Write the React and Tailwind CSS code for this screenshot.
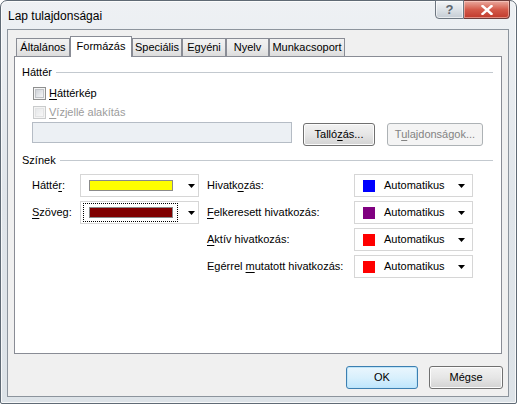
import React from "react";

const Arrow = () => (
  <svg width="7" height="4" viewBox="0 0 7 4" className="shrink-0">
    <path d="M0 0H7L3.5 4Z" fill="#000" />
  </svg>
);

const Checkbox = ({ disabled }) => (
  <div
    className={
      "w-[13px] h-[13px] border p-px shrink-0 " +
      (disabled ? "border-[#c9cbcc] bg-[#f4f4f4]" : "border-[#8e8f8f] bg-[#f4f4f4]")
    }
  >
    <div
      className={
        "w-full h-full border " +
        (disabled
          ? "border-[#e2e3e4] bg-gradient-to-br from-[#e6e8ea] to-[#f7f7f7]"
          : "border-[#c0c3c7] bg-gradient-to-br from-[#cfd3d8] to-[#f5f6f7]")
      }
    />
  </div>
);

const Header = ({ children }) => (
  <div className="h-[16px] flex items-center pl-[7px] pr-[8px]">
    <span>{children}</span>
    <div className="flex-1 h-px bg-[#c3c9cf] ml-[4px]" />
  </div>
);

const WinButton = ({ children, w, isDefault, disabled }) => {
  let cls =
    "h-[23px] rounded-[3px] border flex items-center justify-center shrink-0 ";
  if (disabled) cls += "border-[#adb2b5] bg-[#f4f4f4] text-[#838383]";
  else if (isDefault)
    cls +=
      "border-[#3c7fb1] bg-gradient-to-b from-[#eaf6fd] via-[#d9f0fc] to-[#bee6fd] shadow-[inset_0_0_0_1px_#bfe4f8]";
  else
    cls +=
      "border-[#707070] bg-gradient-to-b from-[#f2f2f2] via-[#e6e6e6] to-[#d3d3d3] shadow-[inset_0_0_0_1px_#fcfcfc]";
  return (
    <div className={cls} style={{ width: w }}>
      {children}
    </div>
  );
};

const LeftCombo = ({ color, focused }) => (
  <div className="w-[119px] h-[23px] border border-[#d6d6d6] bg-white flex items-center">
    <div
      className={
        "ml-[2px] w-[95px] h-[19px] flex items-center pl-[5px] border border-dotted " +
        (focused ? "border-black" : "border-transparent")
      }
    >
      <div className="w-[84px] h-[11px] border border-[#8a8a8a]" style={{ background: color }} />
    </div>
    <div className="ml-auto mr-[3px]">
      <Arrow />
    </div>
  </div>
);

const RightCombo = ({ color }) => (
  <div className="w-[119px] h-[23px] border border-[#d6d6d6] bg-white flex items-center">
    <div className="ml-[8px] w-[12px] h-[12px]" style={{ background: color }} />
    <span className="ml-[9px]">Automatikus</span>
    <div className="ml-auto mr-[7px]">
      <Arrow />
    </div>
  </div>
);

const tabs = [
  { label: "Általános", w: 54 },
  { label: "Formázás", w: 62, sel: true },
  { label: "Speciális", w: 50 },
  { label: "Egyéni", w: 44 },
  { label: "Nyelv", w: 43 },
  { label: "Munkacsoport", w: 76 },
];

const U = ({ children }) => <span className="underline underline-offset-[2px]">{children}</span>;

export default function App() {
  return (
    <div className="w-[517px] h-[404px] bg-white font-['Liberation_Sans',Arial,sans-serif] text-[11px] text-black leading-none">
      <div className="w-full h-full flex flex-col border border-[#5f6a75] rounded-t-[7px] rounded-b-[2px] bg-gradient-to-b from-[#eef1f4] via-[#e0e5ea] to-[#dde3e8] shadow-[inset_0_0_0_1px_rgba(255,255,255,0.75)]">
        {/* title bar */}
        <div className="h-[28px] flex items-start justify-between shrink-0">
          <div className="pl-[7px] pt-[9px] text-[12px]">Lap tulajdonságai</div>
          <div className="flex mr-[6px] -mt-px">
            <div className="w-[29px] h-[19px] border border-[#6d7680] rounded-bl-[4px] bg-gradient-to-b from-[#f3f5f7] via-[#dde2e7] to-[#c5ccd3] flex items-center justify-center text-[#5d6670] text-[13px] font-bold shadow-[inset_0_0_0_1px_rgba(255,255,255,0.6)]">
              ?
            </div>
            <div className="w-[46px] h-[19px] border border-l-0 border-[#6d3c3a] rounded-br-[4px] bg-gradient-to-b from-[#e9a99f] via-[#d45a4a] to-[#c0392b] flex items-center justify-center shadow-[inset_0_0_0_1px_rgba(255,220,210,0.5)]">
              <svg width="12" height="10" viewBox="0 0 12 10">
                <path d="M1.5 1L10.5 9M10.5 1L1.5 9" stroke="#fff" strokeWidth="2.4" strokeLinecap="square" />
              </svg>
            </div>
          </div>
        </div>

        {/* client */}
        <div className="flex-1 ml-[6px] mr-[7px] mb-[6px] border border-[#8c949d] bg-[#f0f0f0] flex flex-col">
          <div className="pt-[6px] ml-[6px]">
            {/* tabs */}
            <div className="h-[20px] flex items-end ml-[2px] relative z-10">
              {tabs.map((t) =>
                t.sel ? (
                  <div
                    key={t.label}
                    className="h-[21px] -mb-px bg-white border border-b-0 border-[#898c95] flex items-start justify-center pt-[4px] shrink-0"
                    style={{ width: t.w }}
                  >
                    {t.label}
                  </div>
                ) : (
                  <div
                    key={t.label}
                    className="h-[18px] border border-b-0 border-[#898c95] bg-gradient-to-b from-[#f2f2f2] via-[#ebebeb] to-[#dcdcdc] flex items-center justify-center shrink-0"
                    style={{ width: t.w }}
                  >
                    {t.label}
                  </div>
                )
              )}
            </div>
            {/* panel */}
            <div className="w-[488px] h-[298px] border border-[#898c95] bg-white flex flex-col">
              <div className="mt-[7px]">
                <Header>Háttér</Header>
              </div>
              <div className="mt-[5px] h-[16px] flex items-center pl-[18px] gap-[3px]">
                <Checkbox />
                <span>
                  <U>H</U>áttérkép
                </span>
              </div>
              <div className="mt-[3px] h-[16px] flex items-center pl-[18px] gap-[3px] text-[#9c9c9c]">
                <Checkbox disabled />
                <span>
                  <U>V</U>ízjellé alakítás
                </span>
              </div>
              <div className="mt-[2px] flex items-start pl-[17px]">
                <div className="w-[260px] h-[21px] border border-[#b5bcc5] bg-[#ecf0f4]" />
                <div className="ml-[11px] mt-[1px]">
                  <WinButton w={72}>
                    <span>
                      Talló<U>z</U>ás...
                    </span>
                  </WinButton>
                </div>
                <div className="ml-[12px] mt-[1px]">
                  <WinButton w={96} disabled>
                    <span>
                      T<U>u</U>lajdonságok...
                    </span>
                  </WinButton>
                </div>
              </div>
              <div className="mt-[6px]">
                <Header>Színek</Header>
              </div>
              <div className="mt-[6px] flex pl-[17px]">
                <div className="flex flex-col gap-[4px]">
                  <div className="flex items-center">
                    <span className="w-[48px]">
                      Hátté<U>r</U>:
                    </span>
                    <LeftCombo color="#ffff00" />
                  </div>
                  <div className="flex items-center">
                    <span className="w-[48px]">
                      <U>S</U>zöveg:
                    </span>
                    <LeftCombo color="#800000" focused />
                  </div>
                </div>
                <div className="ml-[8px] flex flex-col gap-[4px]">
                  <div className="flex items-center">
                    <span className="w-[147px]">
                      Hivatk<U>o</U>zás:
                    </span>
                    <RightCombo color="#0000ff" />
                  </div>
                  <div className="flex items-center">
                    <span className="w-[147px]">
                      <U>F</U>elkeresett hivatkozás:
                    </span>
                    <RightCombo color="#800080" />
                  </div>
                  <div className="flex items-center">
                    <span className="w-[147px]">
                      <U>A</U>ktív hivatkozás:
                    </span>
                    <RightCombo color="#ff0000" />
                  </div>
                  <div className="flex items-center">
                    <span className="w-[147px] whitespace-nowrap">
                      Egérrel <U>m</U>utatott hivatkozás:
                    </span>
                    <RightCombo color="#ff0000" />
                  </div>
                </div>
              </div>
            </div>
          </div>
          {/* bottom buttons */}
          <div className="mt-[12px] flex justify-end pr-[5px] gap-[11px]">
            <WinButton w={72} isDefault>
              OK
            </WinButton>
            <WinButton w={74}>Mégse</WinButton>
          </div>
        </div>
      </div>
    </div>
  );
}
